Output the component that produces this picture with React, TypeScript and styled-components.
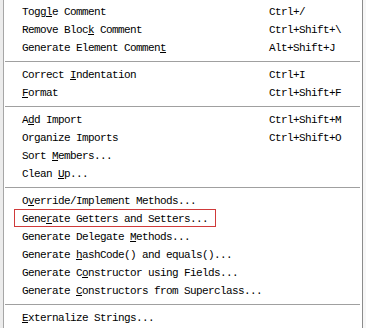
import React from 'react';
import styled, { createGlobalStyle } from 'styled-components';

type Entry =
  | { kind: 'item'; label: string; keys?: string; marked?: boolean }
  | { kind: 'sep' };

// '&' marks the mnemonic letter, as in the Eclipse menu definitions
const entries: Entry[] = [
  { kind: 'item', label: 'Togg&le Comment', keys: 'Ctrl+/' },
  { kind: 'item', label: 'Remove Bloc&k Comment', keys: 'Ctrl+Shift+\\' },
  { kind: 'item', label: 'Generate Element Commen&t', keys: 'Alt+Shift+J' },
  { kind: 'sep' },
  { kind: 'item', label: 'Correct &Indentation', keys: 'Ctrl+I' },
  { kind: 'item', label: '&Format', keys: 'Ctrl+Shift+F' },
  { kind: 'sep' },
  { kind: 'item', label: 'A&dd Import', keys: 'Ctrl+Shift+M' },
  { kind: 'item', label: 'Organize Imports', keys: 'Ctrl+Shift+O' },
  { kind: 'item', label: 'Sort &Members...' },
  { kind: 'item', label: 'Clean &Up...' },
  { kind: 'sep' },
  { kind: 'item', label: 'O&verride/Implement Methods...' },
  { kind: 'item', label: 'Gene&rate Getters and Setters...', marked: true },
  { kind: 'item', label: 'Generate Delegate &Methods...' },
  { kind: 'item', label: 'Generate &hashCode() and equals()...' },
  { kind: 'item', label: 'Generate C&onstructor using Fields...' },
  { kind: 'item', label: 'Generate &Constructors from Superclass...' },
  { kind: 'sep' },
  { kind: 'item', label: '&Externalize Strings...' },
];

const renderLabel = (label: string) => {
  const i = label.indexOf('&');
  if (i < 0) return label;
  return (
    <>
      {label.slice(0, i)}
      <Mnemonic>{label[i + 1]}</Mnemonic>
      {label.slice(i + 2)}
    </>
  );
};

const App = () => {
  return (
    <>
      <GlobalStyle />
      <Screen>
        <Backdrop />
        <Menu>
          {entries.map((e, idx) =>
            e.kind === 'sep' ? (
              <Separator key={idx} />
            ) : (
              <Item key={idx}>
                <Label marked={!!e.marked}>{renderLabel(e.label)}</Label>
                <Keys>{e.keys}</Keys>
              </Item>
            )
          )}
        </Menu>
        <Backdrop side="right" />
      </Screen>
    </>
  );
};

const GlobalStyle = createGlobalStyle`
  html, body {
    margin: 0;
    padding: 0;
    background: #ffffff;
  }
  body {
    font-family: 'Liberation Mono', 'DejaVu Sans Mono', monospace;
  }
`;

const Screen = styled.div`
  width: 366px;
  height: 328px;
  overflow: hidden;
  display: flex;
`;

const Backdrop = styled.div<{ side?: 'right' }>`
  flex: 0 0 3px;
  background: ${(p) => (p.side === 'right' ? '#f7f7f7' : '#ececec')};
`;

const Menu = styled.div`
  width: 358px;
  flex: 0 0 358px;
  background: #ffffff;
  border-left: 1px solid #a6a6a6;
  border-right: 1px solid #8c8c8c;
  padding-top: 3px;
  display: flex;
  flex-direction: column;
`;

const Item = styled.div`
  height: 18px;
  display: flex;
  align-items: center;
  padding-left: 18px;
  font-size: 11px;
  letter-spacing: -0.6px;
  color: #000000;
  white-space: pre;
`;

const Label = styled.span<{ marked: boolean }>`
  position: relative;
  width: 247px;
  flex: 0 0 247px;
  &::after {
    content: '';
    display: ${(p) => (p.marked ? 'block' : 'none')};
    position: absolute;
    left: -8px;
    top: -4px;
    width: 200px;
    height: 16px;
    border: 1px solid #cf3a3a;
  }
`;

const Keys = styled.span``;

const Mnemonic = styled.span`
  text-decoration: underline;
  text-underline-offset: 1px;
`;

const Separator = styled.div`
  height: 9px;
  display: flex;
  align-items: center;
  padding-left: 1px;
  padding-right: 2px;
  &::before {
    content: '';
    flex: 1;
    height: 1px;
    background: #a0a0a0;
  }
`;

export default App;
